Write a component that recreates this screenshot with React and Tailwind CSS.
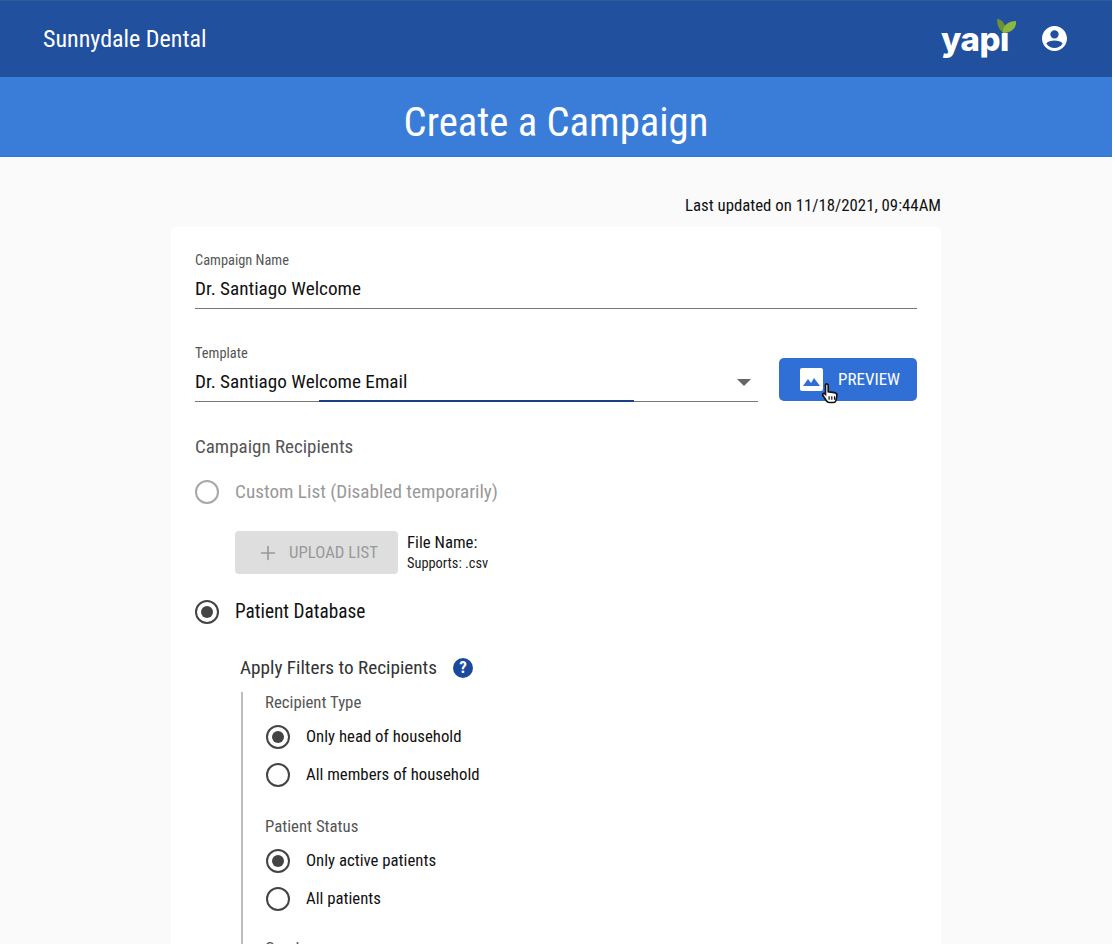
import React from 'react';
import { Plus } from 'lucide-react';

function Radio({ checked, muted }) {
  return (
    <span className={`w-6 h-6 shrink-0 rounded-full border-2 flex items-center justify-center ${muted ? 'border-[#a8a8a8]' : 'border-[#444]'}`}>
      {checked && <span className="w-3 h-3 rounded-full bg-[#444]" />}
    </span>
  );
}

function SubOption({ label, checked }) {
  return (
    <div className="h-[38px] flex items-center gap-[16px]">
      <Radio checked={checked} />
      <span className="text-[16.800px] text-[#111]">{label}</span>
    </div>
  );
}

export default function App() {
  return (
    <div className="w-[1112px] h-[944px] overflow-hidden bg-[#fafafa] font-['Roboto',sans-serif] [font-stretch:75%]">
      <header className="h-[77px] bg-[#20509e] flex items-center justify-between pl-[43px] pr-[45px] border-t border-[#2f5a94]">
        <span className="text-[24px] text-white -mt-[1px]">Sunnydale Dental</span>
        <div className="flex items-center gap-[25px]">
          <div className="relative h-[44px] w-[76px]">
            <span className="absolute left-0 top-[2px] text-[33px] leading-[40px] font-extrabold text-white tracking-[-0.5px] font-['Inter',sans-serif] [font-stretch:100%]">yapı</span>
            <svg className="absolute left-[56px] top-[2px] w-[19px] h-[14px]" viewBox="0 0 19 14">
              <path d="M8 14C3 13 0 7 0 0c5 0 10 6 8 14z" fill="#6b9331" />
              <path d="M6 14C5 7 11 2 19 2c1 6-4 12-13 12z" fill="#8ab840" />
            </svg>
          </div>
          <svg className="w-[25px] h-[25px] -mt-[1px]" viewBox="0 0 24 24" fill="white">
            <path d="M12 0C5.400 0 0 5.400 0 12s5.400 12 12 12 12-5.400 12-12S18.600 0 12 0zm0 4a4 4 0 1 1 0 8 4 4 0 0 1 0-8zm0 17c-3.300 0-6.200-1.600-7.800-4.300C5.600 14.900 9 14 12 14s6.400.9 7.800 2.700C18.200 19.400 15.300 21 12 21z" />
          </svg>
        </div>
      </header>

      <div className="h-[80px] bg-[#3a7dd9] border-b border-[#2f74d6] flex items-center justify-center pt-[12px]">
        <h1 className="text-[40.700px] text-white">Create a Campaign</h1>
      </div>

      <main className="w-[770px] ml-[171px]">
        <p className="h-[70px] pt-[38px] text-right text-[16.800px] leading-[20px] text-[#111]">Last updated on 11/18/2021, 09:44AM</p>

        <section className="bg-white rounded-[6px] px-[24px] pt-[25px] h-[800px]">
          <label className="block text-[14.400px] leading-[18px] text-[#555]">Campaign Name</label>
          <div className="mt-[7px] h-[32px] border-b border-[#777] text-[19.200px] leading-[24px] text-[#111]">Dr. Santiago Welcome</div>

          <div className="mt-[36px] flex items-start gap-[21px]">
            <div className="flex-1">
              <label className="block text-[14.400px] leading-[18px] text-[#555]">Template</label>
              <div className="relative mt-[7px] h-[32px] border-b border-[#777] text-[19.200px] leading-[24px] text-[#111] flex justify-between">
                <span>Dr. Santiago Welcome Email</span>
                <span className="mt-[9px] mr-[7px] w-0 h-0 border-x-[7px] border-x-transparent border-t-[7px] border-t-[#666]" />
                <span className="absolute left-[124px] -bottom-[1px] w-[315px] h-[2px] bg-[#1b3f87]" />
              </div>
            </div>
            <div className="relative mt-[13px]">
              <button className="w-[138px] h-[43px] bg-[#2f6fd6] rounded-[5px] flex items-center gap-[15px] pl-[21px] text-[17px] text-white">
                <svg className="w-[23px] h-[23px]" viewBox="0 0 23 23">
                  <rect width="23" height="23" rx="2" fill="white" />
                  <path d="M3 18l5-7 3 4 3-5 6 8z" fill="#2f6fd6" />
                </svg>
                PREVIEW
              </button>
              <svg className="absolute left-[42px] top-[24px] w-[18px] h-[23px]" viewBox="0 0 20 24">
                <path d="M5 2c1-1 3-1 3 1v7l7 1c2 .5 3 2 2.500 4l-1 5c-.3 1-1 2-2.500 2H9c-1 0-2-.5-3-2l-4-6c-.8-1.500.8-3 2.500-1.500L5 13z" fill="white" stroke="#111" strokeWidth="1.800" />
                <path d="M9 15v4M12 15v4M15 15v4" stroke="#111" strokeWidth="1.300" />
              </svg>
            </div>
          </div>

          <h2 className="mt-[34px] text-[19px] leading-[22px] text-[#555]">Campaign Recipients</h2>

          <div className="mt-[22px] flex items-center gap-[16px]">
            <Radio muted />
            <span className="text-[19.200px] leading-[24px] text-[#999]">Custom List (Disabled temporarily)</span>
          </div>

          <div className="mt-[27px] ml-[40px] flex items-center gap-[9px]">
            <div className="w-[163px] h-[43px] rounded-[4px] bg-[#dedede] pl-[2px] flex items-center justify-center gap-[10px] text-[16.800px] text-[#999]">
              <Plus size={22} strokeWidth={1.8} />
              UPLOAD LIST
            </div>
            <div className="-mt-[1px]">
              <p className="text-[16.800px] leading-[20px] text-[#111]">File Name:</p>
              <p className="text-[14.400px] leading-[18px] text-[#222] mt-[3px]">Supports: .csv</p>
            </div>
          </div>

          <div className="mt-[26px] flex items-center gap-[16px]">
            <Radio checked />
            <span className="text-[19.300px] leading-[24px] text-[#111]">Patient Database</span>
          </div>

          <div className="mt-[32px] ml-[45px] flex items-center gap-[16px]">
            <span className="text-[19.200px] leading-[24px] text-[#333]">Apply Filters to Recipients</span>
            <span className="w-[20px] h-[20px] rounded-full bg-[#1b4a9c] text-white text-[17px] font-bold flex items-center justify-center">?</span>
          </div>

          <div className="mt-[12px] ml-[46px] pl-[23px] border-l-2 border-[#bdbdbd] h-[300px]">
            <p className="-ml-[1px] text-[16.800px] leading-[20px] text-[#555]">Recipient Type</p>
            <div className="mt-[6px]">
              <SubOption label="Only head of household" checked />
              <SubOption label="All members of household" />
            </div>
            <p className="-ml-[1px] mt-[22px] text-[16.800px] leading-[20px] text-[#555]">Patient Status</p>
            <div className="mt-[6px]">
              <SubOption label="Only active patients" checked />
              <SubOption label="All patients" />
            </div>
            <p className="-ml-[1px] mt-[20px] text-[16.800px] leading-[20px] text-[#555]">Gender</p>
          </div>
        </section>
      </main>
    </div>
  );
}
